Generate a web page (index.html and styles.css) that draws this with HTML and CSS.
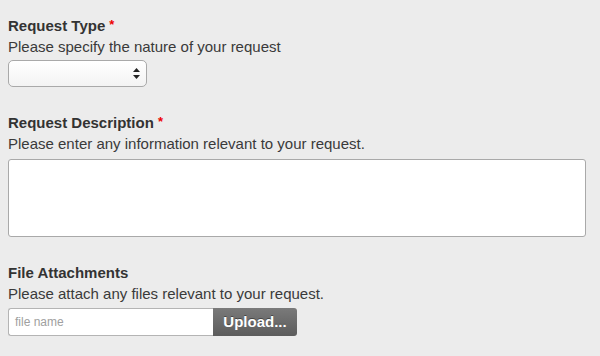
FILE: index.html
```html
<!DOCTYPE html>
<html lang="en">

<head>
    <meta charset="UTF-8">
    <title>Request Form</title>
    <link rel="stylesheet" href="styles.css">
</head>

<body>
    <form class="request-form">
        <div class="field">
            <label class="field-label">Request Type<span class="req">*</span></label>
            <p class="field-help">Please specify the nature of your request</p>
            <div class="select-box">
                <svg class="select-arrows" width="7" height="11" viewBox="0 0 7 11">
                    <path d="M3.5 0 L7 4 L0 4 Z" fill="#222"/>
                    <path d="M0 7 L7 7 L3.5 11 Z" fill="#222"/>
                </svg>
            </div>
        </div>

        <div class="field">
            <label class="field-label">Request Description<span class="req">*</span></label>
            <p class="field-help">Please enter any information relevant to your request.</p>
            <div class="text-box"></div>
        </div>

        <div class="field">
            <label class="field-label">File Attachments</label>
            <p class="field-help">Please attach any files relevant to your request.</p>
            <div class="upload-row">
                <div class="file-name">file name</div>
                <div class="upload-btn">Upload...</div>
            </div>
        </div>
    </form>
</body>

</html>
```

FILE: styles.css
```css
body {
    margin: 0;
    background: #ececec;
    font-family: "Liberation Sans", Arial, sans-serif;
    color: #333;
}

.request-form {
    padding: 15px 14px 0 8px;
}

.field {
    margin-bottom: 25px;
}

.field-label {
    display: block;
    font-size: 15px;
    font-weight: bold;
    line-height: 21px;
    height: 21px;
    color: #333;
}

.req {
    color: #e00;
    font-size: 13px;
    line-height: 1;
    margin-left: 4px;
    vertical-align: 2px;
}

.field-help {
    margin: 0;
    font-size: 15px;
    line-height: 21px;
    color: #3a3a3a;
}

.select-box {
    margin-top: 3px;
    width: 131px;
    height: 25px;
    border: 1px solid #a9a9a9;
    border-radius: 5px;
    background: linear-gradient(to bottom, #ffffff, #f3f3f3);
    display: flex;
    align-items: center;
    justify-content: flex-end;
    padding-right: 6px;
}

.select-arrows {
    display: block;
}

.text-box {
    margin-top: 5px;
    height: 76px;
    border: 1px solid #a9a9a9;
    border-radius: 3px;
    background: #fff;
}

.upload-row {
    margin-top: 4px;
    display: flex;
    height: 28px;
}

.file-name {
    width: 198px;
    border: 1px solid #b4b4b4;
    border-right: none;
    border-radius: 3px 0 0 3px;
    background: #fff;
    color: #a0a0a0;
    font-size: 12px;
    line-height: 26px;
    padding-left: 6px;
}

.upload-btn {
    width: 84px;
    background: linear-gradient(to bottom, #7a7a7a, #5c5c5c);
    border-radius: 0 3px 3px 0;
    color: #fff;
    font-size: 15px;
    font-weight: bold;
    line-height: 28px;
    text-align: center;
    text-shadow: 0 -1px 0 rgba(0, 0, 0, 0.4);
}
```
